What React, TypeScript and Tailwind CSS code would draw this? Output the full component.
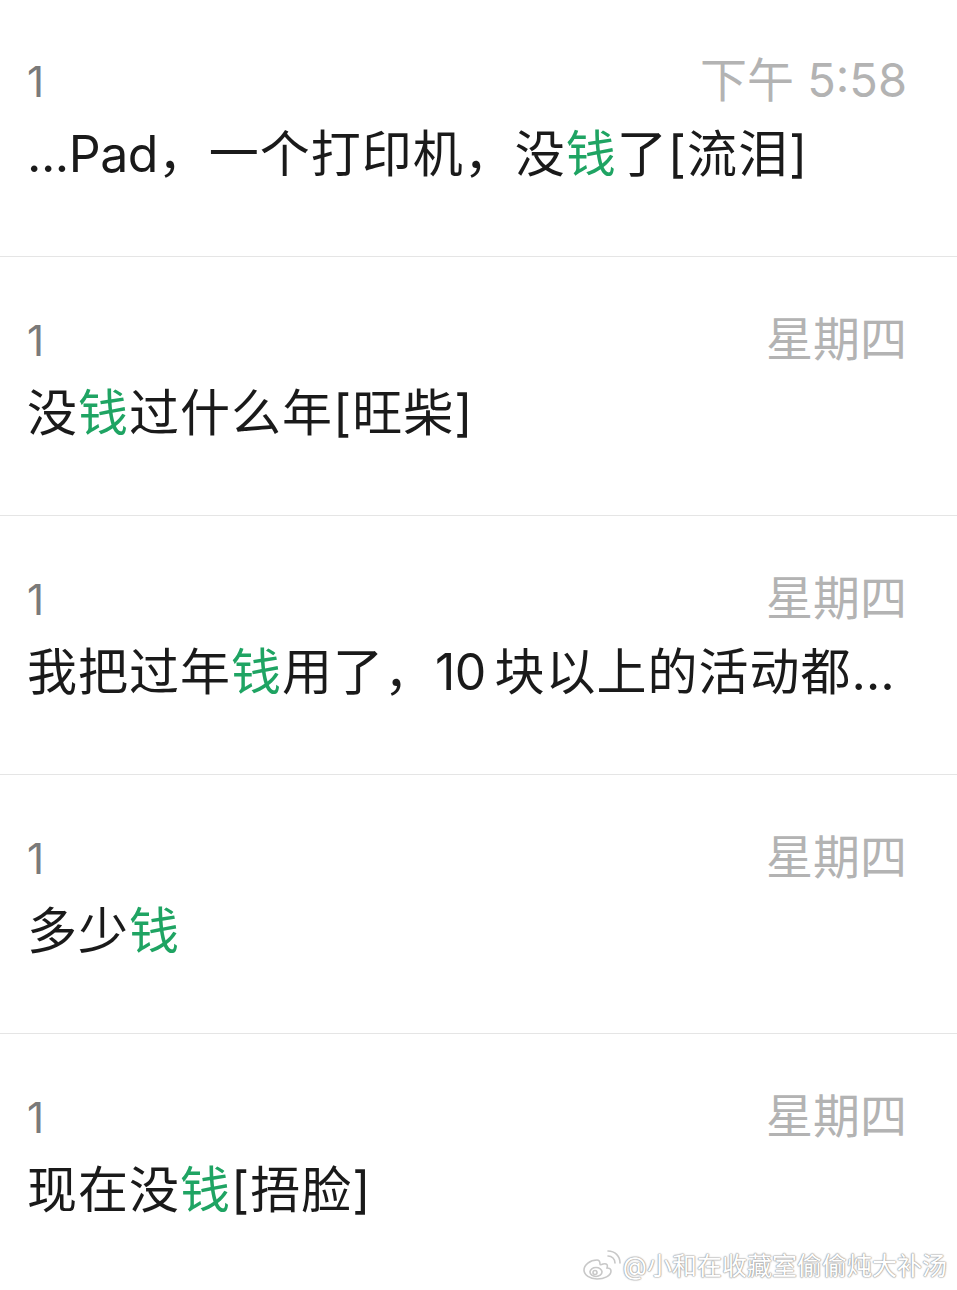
import React from "react"

type Part = { t: string; hl?: boolean; latin?: boolean }
type Item = { time: string; parts: Part[] }

const items: Item[] = [
  {
    time: "下午 5:58",
    parts: [
      { t: "...Pad", latin: true },
      { t: "，一个打印机，没" },
      { t: "钱", hl: true },
      { t: "了[流泪]" },
    ],
  },
  {
    time: "星期四",
    parts: [{ t: "没" }, { t: "钱", hl: true }, { t: "过什么年[旺柴]" }],
  },
  {
    time: "星期四",
    parts: [
      { t: "我把过年" },
      { t: "钱", hl: true },
      { t: "用了，" },
      { t: "10\u2009", latin: true },
      { t: "块以上的活动都…" },
    ],
  },
  {
    time: "星期四",
    parts: [{ t: "多少" }, { t: "钱", hl: true }],
  },
  {
    time: "星期四",
    parts: [{ t: "现在没" }, { t: "钱", hl: true }, { t: "[捂脸]" }],
  },
]

function WeiboLogo() {
  return (
    <svg width="40" height="32" viewBox="0 0 40 32" fill="none">
      <g stroke="#c8c8c8" strokeWidth="1.6">
        <path d="M16 10c-7 0-13 5-13 10 0 5 6 9 13 9s14-3 14-8c0-3-3-3-4-3 1-3 0-5-4-4-2 1-3 1-3 0 0-3-1-4-3-4z" fill="#fff" />
        <ellipse cx="15" cy="22" rx="6" ry="4.5" fill="#fff" />
        <circle cx="14" cy="22.5" r="2" fill="#fff" />
        <path d="M27 6c4 0 7 3 7 7" strokeLinecap="round" />
        <path d="M27 1c7 0 12 5 12 12" strokeLinecap="round" />
      </g>
    </svg>
  )
}

export default function App() {
  return (
    <div
      className="relative w-[957px] h-[1290px] overflow-hidden bg-white"
      style={{ fontFamily: '"Inter", "Noto Sans CJK SC", sans-serif' }}
    >
      <div className="-mt-[2px]">
        {items.map((item, i) => (
          <div key={i} className="h-[259px] border-b border-[#e5e5e5] pl-[27px] pr-[50px] pt-[56px]">
            <div className="flex items-baseline justify-between h-[52px]">
              <span className="text-[42px] leading-[52px] text-[#7a7a7a]">1</span>
              <span className="text-[47px] leading-[52px] text-[#b3b3b3]">{item.time}</span>
            </div>
            <div className="mt-[11px] text-[50px] leading-[74px] text-[#1a1a1a] whitespace-nowrap tracking-[1px]">
              {item.parts.map((p, j) => (
                <span
                  key={j}
                  className={p.hl ? "text-[#1fa463]" : p.latin ? "tracking-[-0.5px]" : undefined}
                >
                  {p.t}
                </span>
              ))}
            </div>
          </div>
        ))}
      </div>

      <div className="absolute right-[10px] bottom-[8px] flex items-center gap-[2px]">
        <WeiboLogo />
        <span
          className="text-[25px] leading-[32px] text-white"
          style={{
            textShadow:
              "0 0 1px #9a9a9a, 0 0 1px #9a9a9a, 0 0 2px #bdbdbd, 0 0 2px #bdbdbd",
          }}
        >
          @小和在收藏室偷偷炖大补汤
        </span>
      </div>
    </div>
  )
}
